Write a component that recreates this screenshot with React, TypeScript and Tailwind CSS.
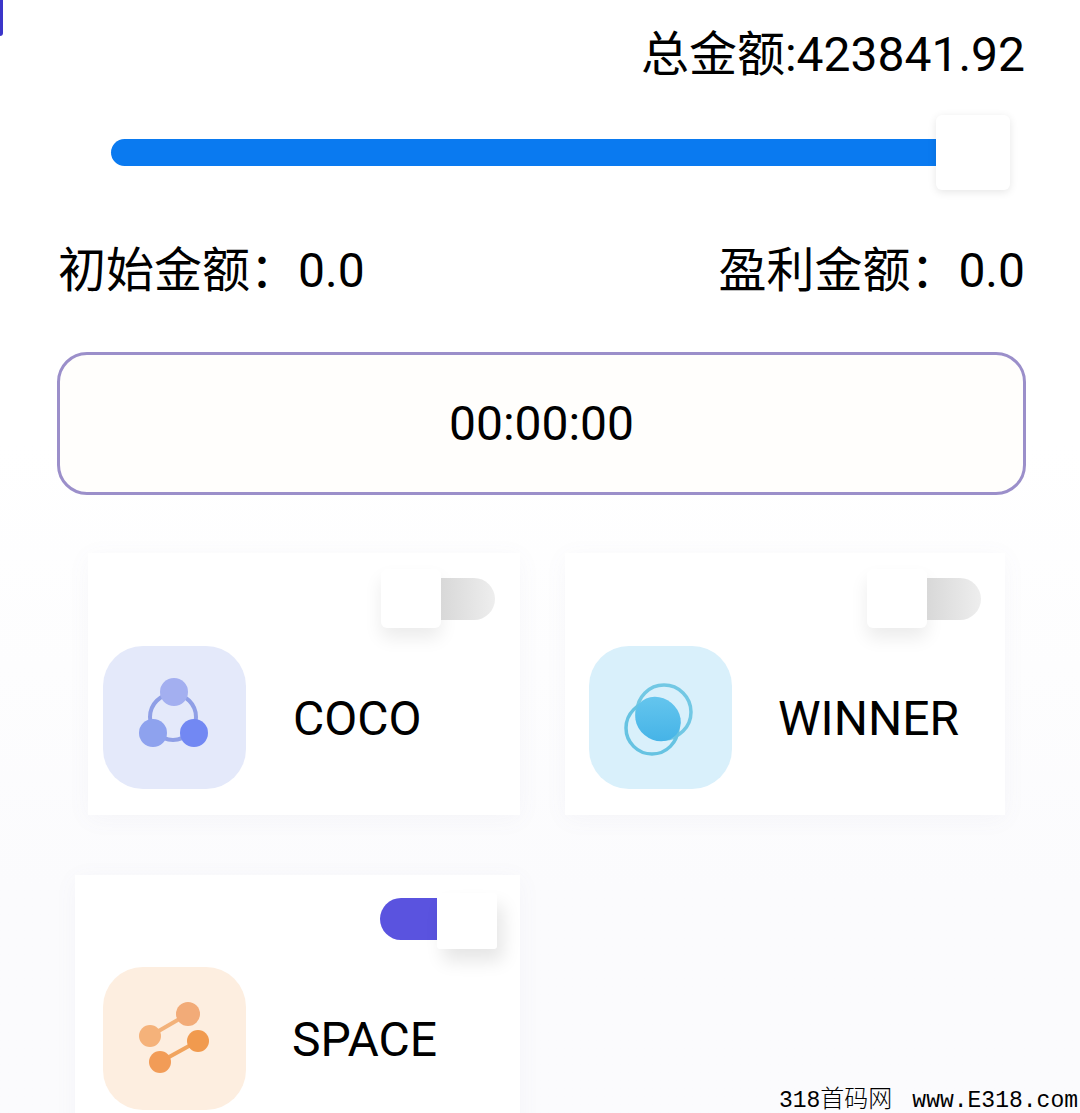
const fontStack = "font-['Roboto','Noto_Sans_CJK_SC',sans-serif]";

const CocoIcon = () => (
  <svg viewBox="0 0 143 143" className="w-full h-full">
    <circle cx="70" cy="71" r="23" fill="none" stroke="#8f9fe6" strokeWidth="4" />
    <circle cx="71" cy="46" r="14" fill="#a3aff0" />
    <circle cx="50" cy="87" r="14" fill="#8ea2ee" />
    <circle cx="91" cy="87" r="14" fill="#7288f3" />
  </svg>
);

const WinnerIcon = () => (
  <svg viewBox="0 0 143 143" className="w-full h-full">
    <defs>
      <linearGradient id="winnerFill" x1="0" y1="0" x2="1" y2="1">
        <stop offset="0" stopColor="#6bc9ef" />
        <stop offset="1" stopColor="#3fb0e6" />
      </linearGradient>
    </defs>
    <circle cx="75" cy="66" r="27" fill="none" stroke="#72c8e4" strokeWidth="3.5" />
    <circle cx="63" cy="82" r="26" fill="none" stroke="#66c3e2" strokeWidth="3.5" />
    <ellipse cx="69" cy="73" rx="24" ry="21" transform="rotate(40 69 73)" fill="url(#winnerFill)" />
  </svg>
);

const SpaceIcon = () => (
  <svg viewBox="0 0 143 143" className="w-full h-full">
    <line x1="47" y1="69" x2="85" y2="47" stroke="#f3b27a" strokeWidth="4" />
    <line x1="57" y1="95" x2="95" y2="74" stroke="#f1a45e" strokeWidth="4" />
    <circle cx="85" cy="47" r="12" fill="#f2ab78" />
    <circle cx="47" cy="69" r="11" fill="#f5b27a" />
    <circle cx="95" cy="74" r="11" fill="#f19a4e" />
    <circle cx="57" cy="95" r="11" fill="#f29c57" />
  </svg>
);

const Toggle = ({ on }: { on?: boolean }) =>
  on ? (
    <div className="flex items-start">
      <div className="w-[57px] h-[42px] mt-[5px] rounded-l-full bg-[#5a53df]" />
      <div className="w-[60px] h-[56px] bg-white rounded-[3px] shadow-[6px_12px_18px_rgba(0,0,0,0.10)]" />
    </div>
  ) : (
    <div className="flex items-center">
      <div className="w-[60px] h-[59px] bg-white rounded-[6px] shadow-[0_10px_18px_rgba(0,0,0,0.08)]" />
      <div className="w-[54px] h-[42px] rounded-r-full bg-gradient-to-r from-[#d8d8d8] to-[#eeeeee]" />
    </div>
  );

type CardProps = {
  name: string;
  tile: string;
  icon: React.ReactNode;
  on?: boolean;
  gap: string;
  className: string;
};

const Card = ({ name, tile, icon, on, gap, className }: CardProps) => (
  <div className={`bg-white shadow-[0_4px_22px_rgba(120,120,160,0.05)] ${className}`}>
    <div className="flex justify-end">
      <Toggle on={on} />
    </div>
    <div className="flex items-center mt-[18px]">
      <div className={`w-[143px] h-[143px] shrink-0 rounded-[40px] ${tile}`}>{icon}</div>
      <span className={`${gap} text-[48px] leading-none text-black pt-[2px]`}>{name}</span>
    </div>
  </div>
);

export default function App() {
  return (
    <div className={`relative h-[1113px] w-[1080px] overflow-hidden bg-gradient-to-b from-white from-40% to-[#fbfbfd] to-80% text-black ${fontStack}`}>
      <div className="absolute left-0 top-0 w-[3px] h-[36px] rounded-br-full bg-[#3b35c9]" />

      <div className="px-[55px] pt-[27px] pb-[57px]">
        <div className="text-right text-[48px] leading-[56px]">总金额:423841.92</div>

        <div className="flex items-center pl-[56px] pr-[15px] mt-[32px]">
          <div className="flex-1 h-[27px] rounded-l-full bg-[#0a7af0]" />
          <div className="w-[74px] h-[75px] bg-white rounded-[6px] shadow-[0_2px_8px_rgba(0,0,0,0.10)]" />
        </div>

        <div className="flex justify-between mt-[53px] text-[48px] leading-[56px] pl-[3px]">
          <span>初始金额：0.0</span>
          <span>盈利金额：0.0</span>
        </div>

        <div className="mt-[53px] ml-[2px] -mr-[1px] h-[143px] rounded-[30px] border-[3px] border-[#9b8fca] bg-[#fffefc] flex items-center justify-center text-[48px] leading-none">
          00:00:00
        </div>
      </div>

      <div className="grid grid-cols-[460px_1fr] mt-[1px]">
        <Card
          name="COCO"
          tile="bg-[#e4e9fa]"
          icon={<CocoIcon />}
          gap="ml-[47px]"
          className="ml-[88px] w-[432px] h-[262px] pl-[15px] pr-[25px] pt-[16px] -mr-[60px]"
        />
        <Card
          name="WINNER"
          tile="bg-[#d9f0fb]"
          icon={<WinnerIcon />}
          gap="ml-[46px]"
          className="ml-[105px] w-[440px] h-[262px] pl-[24px] pr-[24px] pt-[16px]"
        />
        <Card
          name="SPACE"
          tile="bg-[#fdeee0]"
          icon={<SpaceIcon />}
          on
          gap="ml-[46px]"
          className="ml-[75px] w-[445px] h-[300px] mt-[60px] pl-[28px] pr-[23px] pt-[18px] -mr-[60px]"
        />
      </div>

      <div className="absolute right-[2px] -bottom-[5px] flex items-baseline text-black font-['Liberation_Mono','Noto_Sans_CJK_SC',monospace]">
        <span className="text-[23px]">318</span>
        <span className="text-[24px] font-['Noto_Sans_CJK_SC',serif] font-light">首码网</span>
        <span className="text-[23px] ml-[20px]">www.E318.com</span>
      </div>
    </div>
  );
}
